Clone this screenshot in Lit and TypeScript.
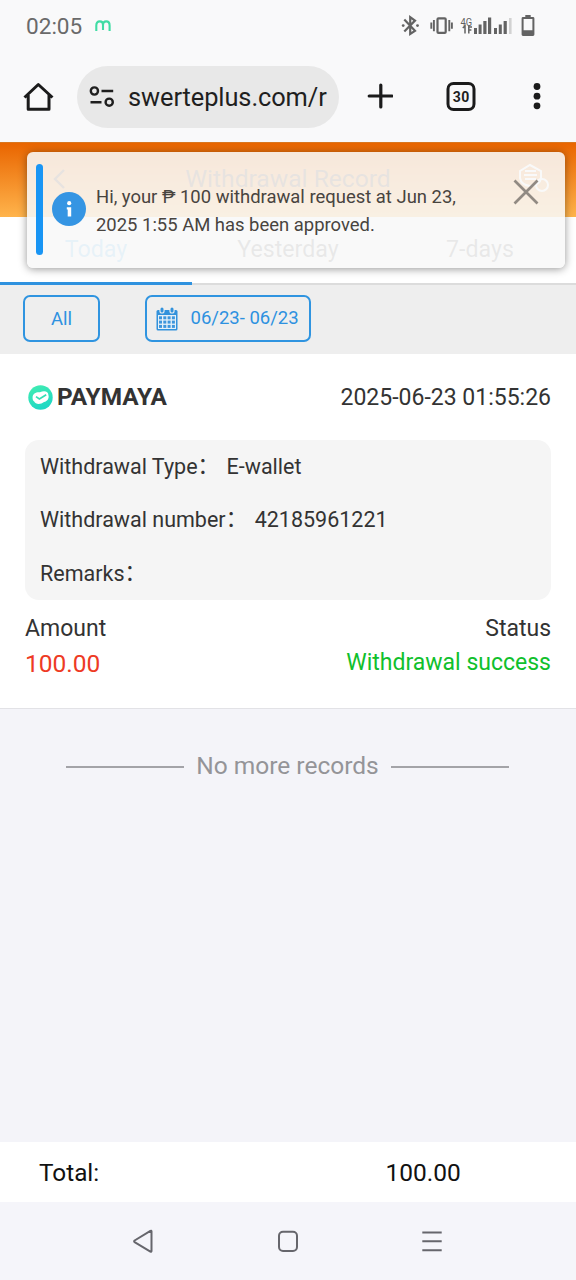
import { LitElement, html, svg, css } from "lit";
import { customElement, property } from "lit/decorators.js";

const FONT = css`Roboto, "Noto Sans CJK SC", sans-serif`;

@customElement("status-bar")
class StatusBar extends LitElement {
  static styles = css`
    :host { display: flex; align-items: center; height: 52px; padding: 0 41px 0 26px; box-sizing: border-box; color: #6a6a6a; font: 22.6px/52px ${FONT}; }
    .time { padding-top: 2px; }
    .maya { margin-left: 13px; }
    .icons { margin-left: auto; display: flex; align-items: center; }
    svg { display: block; flex: none; }
    .net { font: 400 10px ${FONT}; }
  `;
  render() {
    return html`
      <span class="time">02:05</span>
      <svg class="maya" width="16" height="12" viewBox="0 0 16 12" fill="none" stroke="#40dca4" stroke-width="2.1"><path d="M1.3 11V5.4Q1.3 1.4 4.8 1.4Q8 1.4 8 4.8V10M8 4.8Q8 1.4 11.2 1.4Q14.6 1.4 14.6 5.4V11"/></svg>
      <div class="icons">
        <svg width="134" height="24" viewBox="401 14 134 24" fill="#636363">
          <path d="M404.3 19.6L415 30.8L410.2 34V17.2L415 20.6L404.3 31.6" fill="none" stroke="#636363" stroke-width="2.2"/>
          <circle cx="403.2" cy="25.6" r="1.4"/><circle cx="417.5" cy="25.6" r="1.4"/>
          <rect x="437.5" y="18.3" width="8.2" height="14.6" rx="1" fill="none" stroke="#636363" stroke-width="2.2"/>
          <path d="M433.9 20V31.2M449.3 20V31.2M431.3 22.5V28.8M451.9 22.5V28.8" stroke="#636363" stroke-width="1.9"/>
          <text class="net" x="460.6" y="25.6" textLength="11.6" lengthAdjust="spacingAndGlyphs">4G</text>
          <path d="M465 33.5V25.8L462.8 28M468.8 25.6V33.5M468.8 27H472M468.8 30H471.4" fill="none" stroke="#636363" stroke-width="1.5"/>
          <path d="M474 28h3v6h-3zM478.6 24.5h3V34h-3zM483.3 21h3.2v13h-3.2zM488 17.5h3.2V34H488zM494 28h3v6h-3zM498.8 24.5h3V34h-3zM503.6 21h3.2v13h-3.2z"/>
          <path d="M509 18h2.6v16H509z" fill="#d2d2d2"/>
          <path fill-rule="evenodd" d="M525.3 15h5.4v2h2.3a1.4 1.4 0 0 1 1.4 1.4v16.2a1.4 1.4 0 0 1-1.4 1.4h-10a1.4 1.4 0 0 1-1.4-1.4V18.4a1.4 1.4 0 0 1 1.4-1.4h2.3zM523.6 19v11.3h8.8V19z"/>
        </svg>
      </div>
    `;
  }
}

@customElement("browser-bar")
class BrowserBar extends LitElement {
  static styles = css`
    :host { display: flex; align-items: center; height: 90px; padding: 0 35px 0 23px; box-sizing: border-box; color: #1f1f1f; font: 25.4px/62px ${FONT}; }
    svg { display: block; flex: none; }
    .url { display: flex; align-items: center; width: 262px; height: 62px; margin: 0 28px 0 23px; padding-left: 12px; box-sizing: border-box; border-radius: 31px; background: #e8e8e8; }
    .address { margin-left: 13px; white-space: nowrap; letter-spacing: -0.08px; }
    .plus { margin-bottom: 2px; }
    .tabs { margin: 0 auto 0 53px; }
    .home { margin-bottom: 1px; }
    .count { font: 700 14px ${FONT}; }
  `;
  render() {
    return html`
      <svg class="home" width="31" height="30" viewBox="0 0 31 30" fill="none" stroke="#1b1b1b" stroke-width="3"><path d="M1.5 15.5L15.3 2.5L29.5 15.5M5.2 13V27.3H26V13" stroke-linejoin="round"/></svg>
      <div class="url">
        <svg width="26" height="22" viewBox="0 0 26 22" fill="none" stroke="#1f1f1f" stroke-width="2.4"><circle cx="5.4" cy="5" r="3.6"/><path d="M12.5 5H24.2M1.5 16.2H12.5"/><circle cx="20.2" cy="16.2" r="3.6"/></svg>
        <span class="address">swerteplus.com/r</span>
      </div>
      <svg class="plus" width="26" height="26" viewBox="0 0 26 26" stroke="#1b1b1b" stroke-width="3.2" stroke-linecap="round"><path d="M13.8 2V24M2.2 13H25"/></svg>
      <svg class="tabs" width="30" height="30" viewBox="0 0 30 30"><rect x="2" y="1.5" width="26" height="26" rx="5.5" fill="none" stroke="#1b1b1b" stroke-width="3"/><text class="count" x="15" y="19.6" text-anchor="middle" textLength="16.6" fill="#1f1f1f">30</text></svg>
      <svg width="8" height="28" viewBox="0 0 8 28" fill="#1b1b1b"><circle cx="4" cy="3.5" r="3.4"/><circle cx="4" cy="13.2" r="3.4"/><circle cx="4" cy="22.8" r="3.4"/></svg>
    `;
  }
}

@customElement("toast-message")
class ToastMessage extends LitElement {
  static styles = css`
    :host { display: flex; box-sizing: border-box; width: 538px; height: 116px; padding: 12px 9px; border-radius: 6px; background: rgba(248,248,248,.88); box-shadow: 0 1px 9px rgba(0,0,0,.42); color: #48443f; font: 18.45px/28px ${FONT}; }
    .bar { width: 7px; height: 91px; border-radius: 3.5px; background: #1995f4; }
    svg { display: block; flex: none; }
    .info { margin: 28px 10px 0 9px; }
    .text { width: 380px; margin-top: 19px; white-space: nowrap; }
    .close { margin: 15px 0 0 36.5px; }
  `;
  render() {
    return html`
      <div class="bar"></div>
      <svg class="info" width="34" height="34" viewBox="0 0 34 34"><circle cx="17" cy="17" r="17" fill="#3595e3"/><circle cx="17.2" cy="11.2" r="2.1" fill="#fff"/><path d="M14.8 15.3H19.2V24.6H15.7V17.5H14.8z" fill="#fff"/></svg>
      <div class="text">Hi, your ₱ 100 withdrawal request at Jun 23,<br />2025 1:55 AM has been approved.</div>
      <svg class="close" width="26" height="26" viewBox="0 0 26 26" stroke="#918a83" stroke-width="2.7"><path d="M1.5 1.5L24.5 24.5M24.5 1.5L1.5 24.5"/></svg>
    `;
  }
}

@customElement("page-header")
class PageHeader extends LitElement {
  static styles = css`
    :host { display: block; font: 24px/32px ${FONT}; }
    .title { display: grid; grid-template-columns: 60px 1fr 60px; align-items: center; height: 75px; box-sizing: border-box; background: linear-gradient(#e96500, #ffb44c); border-top: 1px solid #d9771f; color: #6b4a35; text-align: center; font-size: 24.6px; }
    .title span { padding-bottom: 3px; }
    svg { display: block; }
    .back { margin: 0 0 2px 52px; }
    .service { margin-left: 0; }
    .tabs { display: grid; grid-template-columns: repeat(3, 1fr); height: 68px; background: #fff; color: #777; text-align: center; }
    .tab { padding-top: 16px; border-bottom: 2px solid #dcdcdc; box-sizing: border-box; font-size: 23.2px; }
    .active { color: #6fc0f0; border-bottom: 3px solid #2f92df; }
  `;
  render() {
    return html`
      <div class="title">
        <svg class="back" width="14" height="20" viewBox="0 0 14 20" fill="none" stroke="#6b4a35" stroke-width="2.4"><path d="M12 1L3 10L12 19"/></svg>
        <span>Withdrawal Record</span>
        <svg class="service" width="36" height="34" viewBox="0 0 36 34" fill="none" stroke="#fff" stroke-width="2"><path d="M4 15V8L14 2L25 8V15Q24 22 14 23Q5 22 4 15zM9 8H20M8 12H21M9 16H20"/><circle cx="26" cy="22" r="6"/></svg>
      </div>
      <div class="tabs">
        <div class="tab active">Today</div>
        <div class="tab">Yesterday</div>
        <div class="tab">7-days</div>
      </div>
    `;
  }
}

@customElement("filter-row")
class FilterRow extends LitElement {
  static styles = css`
    :host { display: flex; align-items: flex-start; height: 69px; box-sizing: border-box; padding: 10px 23px; background: #eeeeee; color: #2d91e0; font: 18.5px/43px ${FONT}; }
    .button { display: flex; justify-content: center; align-items: center; box-sizing: border-box; height: 47px; border: 2px solid #2f94e0; border-radius: 7px; }
    .all { width: 77px; margin-right: 45px; padding-top: 2px; }
    .date { width: 166px; justify-content: flex-start; padding-left: 8.5px; }
    .range { margin: 0 0 0 13px; white-space: nowrap; }
    svg { display: block; }
  `;
  render() {
    const cells = [0, 1, 2, 3].flatMap((c) => [0, 1, 2].map((r) => svg`<rect x=${3 + c * 4.3} y=${9.3 + r * 4.3} width="3" height="3"/>`));
    return html`
      <div class="button all">All</div>
      <div class="button date">
        <svg width="22" height="24" viewBox="0 0 22 24">
          <rect x="0.5" y="3" width="21" height="20.5" rx="1.5" fill="#3292dc"/>
          <rect x="2" y="8" width="18" height="14" fill="#e7f1f8"/>
          <g fill="#3e96dc">${cells}</g>
          <path d="M6 3V4M16 3V4" stroke="#eee" stroke-width="5.2" stroke-linecap="round"/>
          <path d="M6 2V4M16 2V4" stroke="#3292dc" stroke-width="3" stroke-linecap="round"/>
        </svg>
        <span class="range">06/23- 06/23</span>
      </div>
    `;
  }
}

@customElement("record-card")
class RecordCard extends LitElement {
  @property({ attribute: false }) details = [
    ["Withdrawal Type", "E-wallet"],
    ["Withdrawal number", "42185961221"],
    ["Remarks", ""],
  ];
  static styles = css`
    :host { display: block; height: 355px; box-sizing: border-box; padding: 0 25px; background: #fff; border-bottom: 1px solid #e2e2e6; color: #333; font: 23px/34px ${FONT}; }
    .head, .pair { display: flex; justify-content: space-between; align-items: center; }
    .head { height: 86px; }
    .time { padding-top: 1px; }
    .brand { display: flex; align-items: center; gap: 4px; padding-left: 3px; font-weight: 700; font-size: 24.4px; }
    svg { display: block; }
    .details { height: 160px; box-sizing: border-box; padding: 0 15px; border-radius: 14px; background: #f5f5f5; font-size: 21.5px; }
    .row { display: flex; align-items: center; height: 53.6px; line-height: 52px; white-space: pre; }
    .colon { margin: -2px 7.5px 0 0; }
    .labels { margin-top: 12px; }
    .labels, .values { height: 34px; }
    .amount { color: #ee3a24; font-size: 24.5px; padding-top: 1px; }
    .status { color: #10c02c; }
  `;
  render() {
    return html`
      <div class="head">
        <div class="brand">
          <svg width="25" height="25" viewBox="0 0 25 25">
            <defs><linearGradient id="g" x1="0" y1="0" x2="0.4" y2="1"><stop offset="0" stop-color="#43eeb0"/><stop offset="1" stop-color="#20d8c4"/></linearGradient></defs>
            <circle cx="12.5" cy="12.5" r="12.2" fill="url(#g)"/>
            <path d="M4.6 12C4.8 8.6 8 6.8 12 7.2C16 5.2 20.6 6.2 20.4 10C21.4 13 19.6 16.4 16 17C13 19.6 7.6 19.8 6.2 16.6C4.8 15.6 4.4 13.6 4.6 12z" fill="#fff"/>
            <path d="M8 11.6L11.4 14L18.2 9.7" fill="none" stroke="#34dfb4" stroke-width="1.7"/>
          </svg>
          <span>PAYMAYA</span>
        </div>
        <span class="time">2025-06-23 01:55:26</span>
      </div>
      <div class="details">${this.details.map(([k, v]) => html`<div class="row"><span>${k}</span><span class="colon">：</span><span>${v}</span></div>`)}</div>
      <div class="pair labels"><span>Amount</span><span>Status</span></div>
      <div class="pair values"><span class="amount">100.00</span><span class="status">Withdrawal success</span></div>
    `;
  }
}

@customElement("nav-bar")
class NavBar extends LitElement {
  static styles = css`
    :host { display: flex; align-items: center; justify-content: center; gap: 122px; height: 78px; padding-right: 2px; box-sizing: border-box; background: #f5f5fa; }
    svg { display: block; }
  `;
  render() {
    return html`
      <svg width="23" height="24" viewBox="0 0 23 24" fill="none" stroke="#66666c" stroke-width="2"><path d="M19.5 2.3V22.2Q19.4 23 18.4 22.6L2.6 13.1Q1.6 12.3 2.6 11.5L18.4 1.9Q19.4 1.5 19.5 2.3z" stroke-linejoin="round"/></svg>
      <svg width="22" height="24" viewBox="0 0 22 24" fill="none" stroke="#66666c" stroke-width="2"><rect x="2" y="2.7" width="18" height="19.2" rx="4"/></svg>
      <svg width="22" height="24" viewBox="0 0 22 24" stroke="#66666c" stroke-width="2"><path d="M1.3 3.5H20.7M1.3 12.3H20.7M1.3 21.2H20.7"/></svg>
    `;
  }
}

@customElement("app-root")
class AppRoot extends LitElement {
  static styles = css`
    :host { display: flex; flex-direction: column; position: relative; width: 576px; height: 1280px; overflow: hidden; background: #f9f9fa; font-family: ${FONT}; }
    .list { flex: 1; background: #f4f4f9; }
    .end { display: flex; align-items: center; gap: 12px; padding: 40px 67px 0 66px; color: #949498; font-size: 24.5px; line-height: 34px; white-space: nowrap; }
    .line { flex: 1; height: 2px; margin-top: 2px; background: #a3a3a8; }
    .total { display: grid; grid-template-columns: 346.5px 1fr; height: 60px; padding-left: 39px; background: #fff; color: #111; font-size: 24.5px; line-height: 61px; }
    .label { font-size: 24.3px; }
    .toast { position: absolute; left: 27px; top: 152px; }
  `;
  render() {
    return html`
      <status-bar></status-bar>
      <browser-bar></browser-bar>
      <page-header></page-header>
      <filter-row></filter-row>
      <record-card></record-card>
      <div class="list">
        <div class="end"><span class="line"></span><span>No more records</span><span class="line"></span></div>
      </div>
      <div class="total"><span class="label">Total:</span><span>100.00</span></div>
      <nav-bar></nav-bar>
      <toast-message class="toast"></toast-message>
    `;
  }
}
